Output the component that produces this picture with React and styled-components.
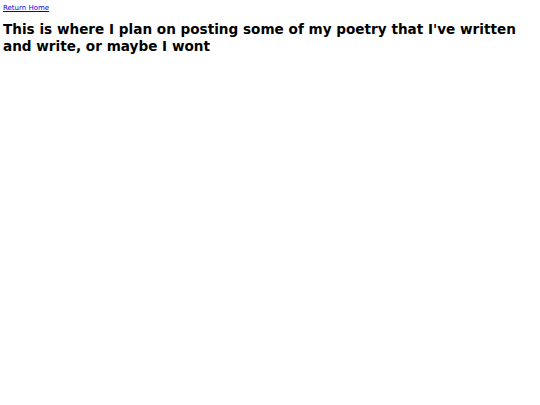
import styled, { createGlobalStyle } from "styled-components";

const GlobalStyle = createGlobalStyle`
  body {
    margin: 3px;
    font-family: "DejaVu Sans", Verdana, sans-serif;
    background: #fff;
    color: #000;
  }
`;

const Page = styled.div`
  display: flex;
  flex-direction: column;
  align-items: flex-start;
`;

const HomeLink = styled.a`
  font-size: 7px;
  color: #0000ee;
  text-decoration: underline;
  line-height: 10px;
`;

const Title = styled.h1`
  font-size: 13.6px;
  font-weight: bold;
  line-height: 17px;
  margin: 8px 0 0;
`;

export default function App() {
  return (
    <Page>
      <GlobalStyle />
      <HomeLink href="#">Return Home</HomeLink>
      <Title>
        This is where I plan on posting some of my poetry that I've written
        and write, or maybe I wont
      </Title>
    </Page>
  );
}
